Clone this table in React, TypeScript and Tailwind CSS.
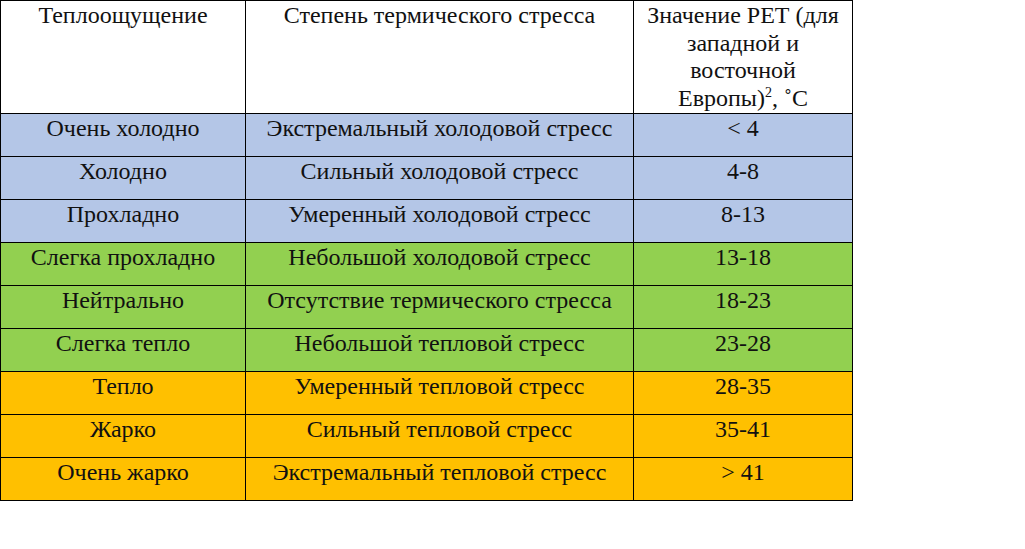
import React from "react";

const rows: [string, string, string, string][] = [
  ["Очень холодно", "Экстремальный холодовой стресс", "< 4", "bg-[#b4c6e7]"],
  ["Холодно", "Сильный холодовой стресс", "4-8", "bg-[#b4c6e7]"],
  ["Прохладно", "Умеренный холодовой стресс", "8-13", "bg-[#b4c6e7]"],
  ["Слегка прохладно", "Небольшой холодовой стресс", "13-18", "bg-[#92d050]"],
  ["Нейтрально", "Отсутствие термического стресса", "18-23", "bg-[#92d050]"],
  ["Слегка тепло", "Небольшой тепловой стресс", "23-28", "bg-[#92d050]"],
  ["Тепло", "Умеренный тепловой стресс", "28-35", "bg-[#ffc000]"],
  ["Жарко", "Сильный тепловой стресс", "35-41", "bg-[#ffc000]"],
  ["Очень жарко", "Экстремальный тепловой стресс", "> 41", "bg-[#ffc000]"],
];

export default function App() {
  const cell = "border border-black align-top text-center px-1 pt-[1px]";
  return (
    <div className="w-[1025px] h-[549px] bg-white text-[#111] font-[family-name:'Liberation_Serif',serif] text-[24px] leading-[27px]">
      <table className="border-collapse table-fixed w-[852px]">
        <colgroup>
          <col className="w-[245px]" />
          <col className="w-[388px]" />
          <col className="w-[219px]" />
        </colgroup>
        <tbody>
          <tr className="h-[113px]">
            <td className={cell}>Теплоощущение</td>
            <td className={cell}>Степень термического стресса</td>
            <td className={cell + " px-2 leading-[27.5px]"}>
              Значение РЕТ (для западной и восточной Европы)
              <sup className="text-[14px] relative top-[-9px] leading-none">2</sup>, ˚С
            </td>
          </tr>
          {rows.map(([a, b, c, bg]) => (
            <tr key={a} className={"h-[43px] " + bg}>
              <td className={cell}>{a}</td>
              <td className={cell}>{b}</td>
              <td className={cell}>{c}</td>
            </tr>
          ))}
        </tbody>
      </table>
    </div>
  );
}
